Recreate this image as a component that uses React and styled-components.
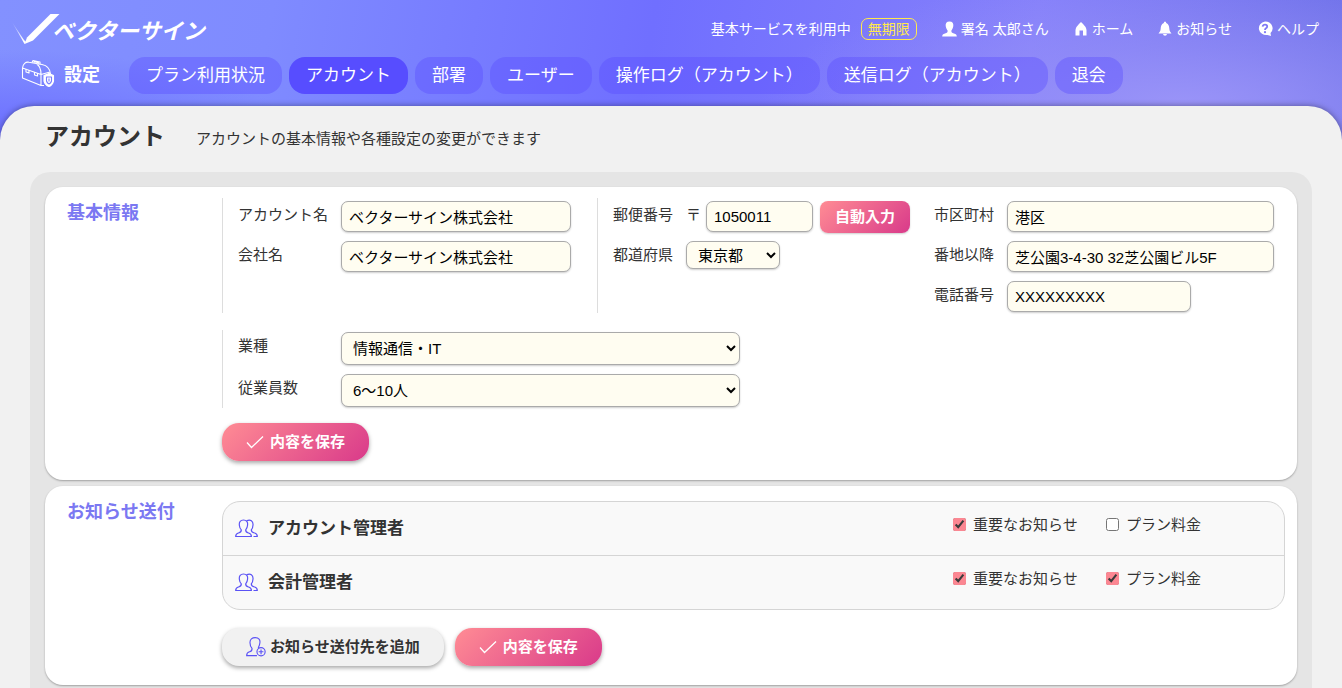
import React, { useState } from "react";
import styled, { createGlobalStyle, css } from "styled-components";

const NAV = [
  "プラン利用状況",
  "アカウント",
  "部署",
  "ユーザー",
  "操作ログ（アカウント）",
  "送信ログ（アカウント）",
  "退会",
];

const RECIPIENTS = [
  { id: "account", name: "アカウント管理者", news: true, fee: false },
  { id: "finance", name: "会計管理者", news: true, fee: true },
];

const App = () => (
  <Page>
    <GlobalStyle />
    <Header />
    <Main>
      <TitleRow>
        <Title>アカウント</Title>
        <Lead>アカウントの基本情報や各種設定の変更ができます</Lead>
      </TitleRow>
      <Panel>
        <BasicInfo />
        <Notices />
      </Panel>
    </Main>
  </Page>
);

export default App;

const Header = () => (
  <HeaderBar>
    <TopRow>
      <Brand href="#">
        <LogoMark />
        <BrandName>ベクターサイン</BrandName>
      </Brand>
      <Status>
        基本サービスを利用中
        <Badge>無期限</Badge>
      </Status>
      <TopLink href="#user">
        <PersonIcon />
        署名 太郎さん
      </TopLink>
      <TopLink href="#home">
        <HomeIcon />
        ホーム
      </TopLink>
      <TopLink href="#news">
        <BellIcon />
        お知らせ
      </TopLink>
      <TopLink href="#help">
        <HelpIcon />
        ヘルプ
      </TopLink>
    </TopRow>
    <NavRow>
      <ToolboxIcon />
      <NavTitle>設定</NavTitle>
      {NAV.map(label => (
        <NavLink key={label} href="#" $active={label === "アカウント"}>
          {label}
        </NavLink>
      ))}
    </NavRow>
  </HeaderBar>
);

const BasicInfo = () => (
  <Card>
    <CardTitle>基本情報</CardTitle>
    <CardBody>
      <Columns>
        <Group $line>
          <Field>
            <Label htmlFor="account">アカウント名</Label>
            <Input id="account" defaultValue="ベクターサイン株式会社" />
          </Field>
          <Field>
            <Label htmlFor="company">会社名</Label>
            <Input id="company" defaultValue="ベクターサイン株式会社" />
          </Field>
        </Group>
        <Group $line>
          <Field>
            <Label htmlFor="zip" $size="narrow">
              郵便番号
            </Label>
            <ZipMark>〒</ZipMark>
            <Input id="zip" $width={107} defaultValue="1050011" />
            <FillButton type="button">自動入力</FillButton>
          </Field>
          <Field>
            <Label htmlFor="pref" $size="narrow">
              都道府県
            </Label>
            <Select id="pref" $width={94} $height={28}>
              <option>東京都</option>
            </Select>
          </Field>
        </Group>
        <Group>
          <Field>
            <Label htmlFor="city" $size="narrow">
              市区町村
            </Label>
            <Input id="city" $width={267} defaultValue="港区" />
          </Field>
          <Field>
            <Label htmlFor="street" $size="narrow">
              番地以降
            </Label>
            <Input
              id="street"
              $width={267}
              defaultValue="芝公園3-4-30 32芝公園ビル5F"
            />
          </Field>
          <Field>
            <Label htmlFor="tel" $size="narrow">
              電話番号
            </Label>
            <Input id="tel" $width={184} defaultValue="XXXXXXXXX" />
          </Field>
        </Group>
      </Columns>
      <CompanyGroup $line>
        <Field>
          <Label htmlFor="industry">業種</Label>
          <Select id="industry" $width={399} $height={33}>
            <option>情報通信・IT</option>
          </Select>
        </Field>
        <Field>
          <Label htmlFor="staff">従業員数</Label>
          <Select id="staff" $width={399} $height={33}>
            <option>6〜10人</option>
          </Select>
        </Field>
      </CompanyGroup>
      <Actions>
        <SaveButton type="button">
          <CheckIcon />
          内容を保存
        </SaveButton>
      </Actions>
    </CardBody>
  </Card>
);

const Notices = () => {
  const [rows, setRows] = useState(RECIPIENTS);
  const toggle = (id, key) =>
    setRows(rows.map(r => (r.id === id ? { ...r, [key]: !r[key] } : r)));

  return (
    <Card>
      <CardTitle>お知らせ送付</CardTitle>
      <CardBody>
        <List>
          {rows.map(row => (
            <ListRow key={row.id}>
              <PeopleIcon />
              <RowName>{row.name}</RowName>
              <NewsCheck>
                <Check
                  type="checkbox"
                  checked={row.news}
                  onChange={() => toggle(row.id, "news")}
                />
                重要なお知らせ
              </NewsCheck>
              <FeeCheck>
                <Check
                  type="checkbox"
                  checked={row.fee}
                  onChange={() => toggle(row.id, "fee")}
                />
                プラン料金
              </FeeCheck>
            </ListRow>
          ))}
        </List>
        <Actions>
          <AddButton type="button">
            <AddPersonIcon />
            お知らせ送付先を追加
          </AddButton>
          <SaveButton type="button">
            <CheckIcon />
            内容を保存
          </SaveButton>
        </Actions>
      </CardBody>
    </Card>
  );
};

const LogoMark = () => (
  <svg width="48" height="32" viewBox="0 0 48 32" aria-hidden="true">
    <defs>
      <linearGradient id="tail" x1="0" y1="0" x2="0.6" y2="1">
        <stop offset="0" stopColor="#fff" stopOpacity="0.1" />
        <stop offset="1" stopColor="#fff" />
      </linearGradient>
    </defs>
    <path d="M0 9 L12 27 L14 29 L12.500 31 Z" fill="url(#tail)" />
    <path d="M38.500 1 H47.500 L21 27.500 L12.500 31 L15 24.500 Z" fill="#fff" />
  </svg>
);

const ToolboxIcon = () => (
  <svg
    width="34"
    height="34"
    viewBox="0 0 34 34"
    fill="none"
    stroke="#fff"
    strokeWidth="1.100"
    strokeLinejoin="round"
    aria-hidden="true"
  >
    <path d="M1.500 9 C2 5 4.500 2.500 8 3.200 L21 5.500 C26 6.500 29 9.500 29.500 15 M1.500 9 V19 L20 26.500 H23 M1.500 9 L20 15.500 V26.500 M20 15.500 C20 10 18.500 6.500 15.500 5 M20 15.500 L29 13" />
    <path d="M11 3.500 L12 1.500 L19 3 V5.500 M13 3.800 V2.800 L17.500 3.800 V4.800" />
    <path d="M5 10 V13 L8 14 V11 M13.500 13 V16 L16.500 17 V14" />
    <path
      d="M23 16.500 L28 14.500 L32.500 16.500 V22 Q31.500 26 28 27.500 Q24 26 23 22 Z"
      fill="#fff"
    />
    <path d="M25.500 18 H30.500 V22 Q30 24 28 25 Q26 24 25.500 22 Z" stroke="#787dff" />
    <path d="M28 19.500 V22.500" stroke="#787dff" />
  </svg>
);

const PersonIcon = () => (
  <svg width="15" height="16" viewBox="0 0 15 16" fill="#fff" aria-hidden="true">
    <path d="M7.500 0.500 C10.500 0.500 11.600 2.500 11.300 5 C11 7.500 10 8.500 9.400 9.500 C9.200 11.500 10 12 12 12.500 C14 13 14.800 13.800 14.800 15.500 H0.200 C0.200 13.800 1 13 3 12.500 C5 12 5.800 11.500 5.600 9.500 C5 8.500 4 7.500 3.700 5 C3.400 2.500 4.500 0.500 7.500 0.500 Z" />
  </svg>
);

const HomeIcon = () => (
  <svg width="14" height="16" viewBox="0 0 14 16" fill="#fff" aria-hidden="true">
    <path d="M7 1 Q12.500 6 12.500 9 V14.500 H9 V9.500 H5.500 V14.500 H1.500 V9 Q1.500 6 7 1 Z" />
  </svg>
);

const BellIcon = () => (
  <svg width="14" height="16" viewBox="0 0 14 16" fill="#fff" aria-hidden="true">
    <path d="M7 0.500 Q8.200 0.500 8.200 2 C10.800 3 11.200 5.500 11.300 7.500 C11.400 10 12.500 11 13.500 12.500 H0.500 C1.500 11 2.600 10 2.700 7.500 C2.800 5.500 3.200 3 5.800 2 Q5.800 0.500 7 0.500 Z" />
    <path d="M5 13 H9 Q8.800 14.800 7 14.800 Q5.200 14.800 5 13 Z" />
  </svg>
);

const HelpIcon = () => (
  <svg width="16" height="16" viewBox="0 0 16 16" aria-hidden="true">
    <path
      d="M8 0.500 A7.300 6.800 0 0 1 13.500 12 L14 15 L10.500 14 A7.300 6.800 0 1 1 8 0.500 Z"
      fill="#fff"
    />
    <path
      d="M5.600 5.600 Q6 3.600 8 3.600 Q10.200 3.600 10.200 5.400 Q10.200 6.500 9 7.200 Q8 7.800 8 8.900"
      fill="none"
      stroke="#7f79f5"
      strokeWidth="1.800"
    />
    <circle cx="8" cy="11.200" r="1.100" fill="#7f79f5" />
  </svg>
);

const CheckIcon = () => (
  <svg width="18" height="14" viewBox="0 0 18 14" fill="none" aria-hidden="true">
    <path d="M1 7.500 L5.500 12.500 L17 1.500" stroke="#fff" strokeWidth="1.300" />
  </svg>
);

const PeopleIcon = () => (
  <svg
    width="23"
    height="19"
    viewBox="0 0 23 19"
    fill="none"
    stroke="#5b52f5"
    strokeWidth="1.200"
    strokeLinejoin="round"
    aria-hidden="true"
  >
    <path d="M8.500 1 C11.500 1 13 2.800 12.600 6 C12.400 8.500 11.400 10 10.700 10.800 C10.500 12.800 11.500 13.500 13.500 14 C15.500 14.500 16.400 15.500 16.400 17.500 H0.700 C0.700 15.500 1.500 14.500 3.500 14 C5.500 13.500 6.500 12.800 6.300 10.800 C5.500 10 4.500 8.500 4.300 6 C4 2.800 5.500 1 8.500 1 Z" />
    <path d="M11.500 1.800 C15.500 0 18.300 2 18 6 C17.900 8.500 17 10 16.300 10.800 C16.200 12.800 17.200 13.400 19.500 14 C21.500 14.500 22.300 15.500 22.300 17.500 H18.500" />
  </svg>
);

const AddPersonIcon = () => (
  <svg
    width="20"
    height="20"
    viewBox="0 0 21 21"
    fill="none"
    stroke="#5b52f5"
    strokeWidth="1.200"
    aria-hidden="true"
  >
    <path d="M11.500 19.500 H0.700 C0.700 17 1.700 16 3.800 15.500 C5.800 15 6.500 14.200 6.300 12 C5 10.500 4.200 9 4.200 6 C4 2.500 6.500 0.700 9.700 0.700 C13.500 0.700 15 2.800 14.600 6 C14.400 8.500 13.600 10 12.800 11.500" />
    <circle cx="15.800" cy="15.500" r="4.300" />
    <path d="M15.800 13 V18 M13.300 15.500 H18.300" />
  </svg>
);

const GlobalStyle = createGlobalStyle`
  * {
    box-sizing: border-box;
  }
  body {
    margin: 0;
    color: #333;
    font-family: "Liberation Sans", "Noto Sans CJK JP", sans-serif;
    font-size: 15px;
    line-height: 24px;
  }
  button, input, select {
    font: inherit;
  }
  a {
    color: inherit;
    text-decoration: none;
  }
  svg {
    flex: none;
  }
`;

const Page = styled.div`
  min-height: 100vh;
  display: flex;
  flex-direction: column;
  background:
    radial-gradient(ellipse 420px 130px at 88% 105px, #9a94f8 0%, rgba(154, 148, 248, 0.5) 45%, rgba(154, 148, 248, 0) 100%),
    radial-gradient(ellipse 300px 90px at 0 140px, #6a6cff 0%, rgba(106, 108, 255, 0) 100%),
    linear-gradient(100deg, #8391ff 0%, #7f8bff 20%, #706fff 48%, #8580fa 76%, #6d70e8 100%);
  background-size: 100% 150px;
  background-repeat: no-repeat;
`;

const HeaderBar = styled.header`
  color: #fff;
  padding: 9px 23px 12px 12px;
`;

const TopRow = styled.div`
  height: 40px;
  display: flex;
  align-items: center;
  gap: 25px;
  font-size: 14px;
`;

const Brand = styled.a`
  display: flex;
  align-items: center;
  margin-right: auto;
`;

const BrandName = styled.span`
  margin: 6px 0 0 -8px;
  font-size: 22px;
  font-style: italic;
  font-weight: 700;
`;

const Status = styled.div`
  display: flex;
  align-items: center;
  gap: 10px;
`;

const Badge = styled.span`
  padding: 0 6px;
  border: 1px solid #ffe94d;
  border-radius: 7px;
  color: #ffe94d;
  line-height: 20px;
`;

const TopLink = styled.a`
  display: flex;
  align-items: center;
  gap: 4px;
`;

const NavRow = styled.nav`
  margin-top: 8px;
  padding-left: 9px;
  display: flex;
  align-items: center;
  gap: 7px;
`;

const NavTitle = styled.strong`
  margin: 0 22px 0 2px;
  padding-bottom: 2px;
  font-size: 18px;
`;

const NavLink = styled.a`
  padding: 0 17px;
  border-radius: 16px;
  background: ${({ $active }) => ($active ? "#574dff" : "rgba(90, 77, 255, 0.4)")};
  font-size: 17px;
  line-height: 37px;
  white-space: nowrap;
`;

const Main = styled.main`
  flex: 1;
  display: flex;
  flex-direction: column;
  padding: 15px 30px 0;
  border-radius: 34px 34px 0 0;
  background: #f1f1f1;
  box-shadow: 0 0 6px rgba(0, 0, 0, 0.4);
`;

const TitleRow = styled.div`
  display: flex;
  align-items: center;
  gap: 31px;
  padding: 0 15px;
  margin-bottom: 19px;
`;

const Title = styled.h1`
  margin: 0;
  font-size: 24px;
  line-height: 32px;
`;

const Lead = styled.p`
  margin: 0;
  padding-top: 3px;
`;

const Panel = styled.div`
  flex: 1;
  padding: 15px 15px 3px;
  border-radius: 20px 20px 0 0;
  background: #e5e5e5;
`;

const Card = styled.section`
  display: flex;
  padding: 11px 12px 19px 22px;
  border-radius: 18px;
  background: #fff;
  box-shadow: 0 1px 2px rgba(0, 0, 0, 0.3);

  & + & {
    margin-top: 6px;
  }
`;

const CardTitle = styled.h2`
  width: 155px;
  flex: none;
  margin: 0;
  padding-top: 3px;
  color: #7b78f2;
  font-size: 18px;
  line-height: 24px;
`;

const CardBody = styled.div`
  flex: 1;
`;

const Columns = styled.div`
  display: grid;
  grid-template-columns: 375fr 321fr 367fr;
  margin-bottom: 17px;
`;

const Group = styled.div`
  display: flex;
  flex-direction: column;
  gap: 9px;
  padding: 3px 0 1px 15px;
  border-left: 1px solid ${({ $line }) => ($line ? "#ddd" : "transparent")};
`;

const Field = styled.div`
  display: flex;
  align-items: flex-start;
  height: 31px;
`;

const CompanyGroup = styled(Group)`
  padding-top: 2px;

  ${Field} {
    height: 33px;
  }
`;

const Label = styled.label`
  width: ${({ $size }) => ($size === "narrow" ? 73 : 103)}px;
  flex: none;
  padding-top: 2px;
`;

const control = css`
  width: ${({ $width = 230 }) => $width}px;
  border: 1px solid #aaa;
  border-radius: 7px;
  background: #fffdf1;
  box-shadow: 0 1px 2px rgba(0, 0, 0, 0.2);
  color: #000;
`;

const Input = styled.input`
  ${control}
  height: 31px;
  padding: 0 7px;
`;

const Select = styled.select`
  ${control}
  height: ${({ $height }) => $height}px;
  padding: 0 0 0 7px;
`;

const ZipMark = styled.span`
  width: 20px;
  padding-top: 2px;
`;

const pink = css`
  border: 0;
  background: linear-gradient(135deg, #ff8c94 0%, #d93a8a 100%);
  color: #fff;
  font-weight: 700;
`;

const FillButton = styled.button`
  ${pink}
  height: 32px;
  margin-left: 7px;
  padding: 0 15px;
  border-radius: 8px;
  box-shadow: 0 1px 2px rgba(0, 0, 0, 0.2);
`;

const Actions = styled.div`
  display: flex;
  gap: 11px;
  margin-top: 15px;
`;

const Button = styled.button`
  display: flex;
  align-items: center;
  gap: 6px;
  height: 38px;
  padding: 0 24px;
  border: 0;
  border-radius: 17px;
  box-shadow: 0 2px 4px rgba(0, 0, 0, 0.35);
  font-weight: 700;
`;

const SaveButton = styled(Button)`
  ${pink}
`;

const AddButton = styled(Button)`
  gap: 4px;
  background: #f1f1f1;
  color: #333;
`;

const List = styled.ul`
  margin: 4px 0 18px;
  padding: 0;
  border: 1px solid #d5d5d5;
  border-radius: 18px;
  background: #f9f9f9;
  list-style: none;
`;

const ListRow = styled.li`
  display: flex;
  align-items: center;
  height: 53px;
  padding: 0 12px;

  & + & {
    height: 54px;
    border-top: 1px solid #d5d5d5;
  }
`;

const RowName = styled.strong`
  flex: 1;
  margin-left: 10px;
  font-size: 17px;
`;

const CheckLabel = styled.label`
  display: flex;
  align-items: center;
  gap: 7px;
  padding-bottom: 8px;
`;

const NewsCheck = styled(CheckLabel)`
  width: 153px;
`;

const FeeCheck = styled(CheckLabel)`
  width: 166px;
`;

const Check = styled.input`
  width: 13px;
  height: 13px;
  margin: 0;
  accent-color: #fb8792;
`;
